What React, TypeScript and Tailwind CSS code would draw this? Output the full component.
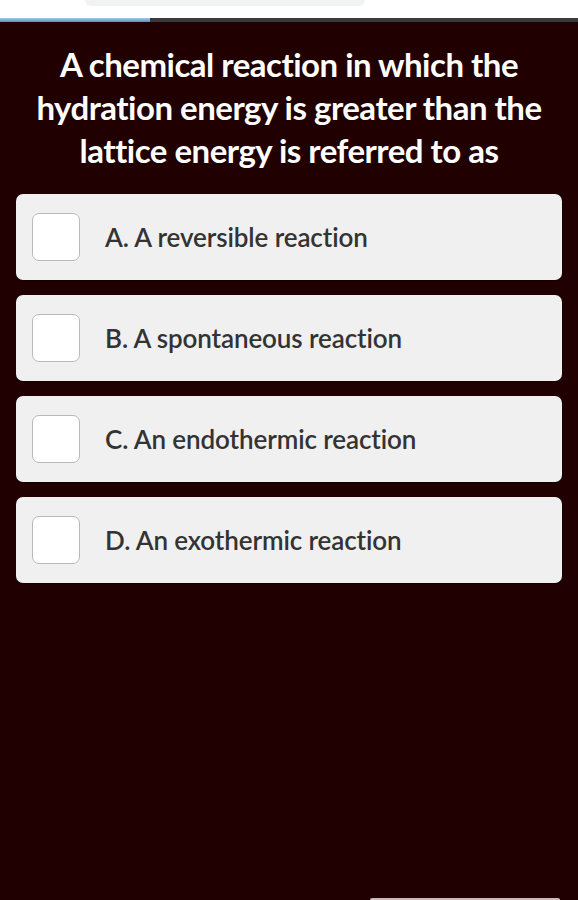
const options = [
  "A. A reversible reaction",
  "B. A spontaneous reaction",
  "C. An endothermic reaction",
  "D. An exothermic reaction",
];

export default function App() {
  return (
    <div className="h-[900px] w-[578px] overflow-hidden bg-[#210001] flex flex-col font-['Lato',sans-serif]">
      <div className="h-[18px] bg-white flex justify-start">
        <div className="ml-[85px] h-[6px] w-[280px] rounded-b-full bg-[#f1f2f4]" />
      </div>
      <div className="h-[4px] bg-[#3a3a3a] flex">
        <div className="w-[150px] h-full bg-gradient-to-b from-[#a9c8e4] to-[#5a8fc0]" />
      </div>

      <h1 className="mt-[21px] px-[20px] text-center text-white font-bold text-[33px] leading-[43px] tracking-[-0.5px]">
        A chemical reaction in which the hydration energy is greater than the lattice energy is referred to as
      </h1>

      <div className="mt-[22px] px-[16px] flex flex-col gap-[15px]">
        {options.map((o) => (
          <div
            key={o}
            className="h-[86px] rounded-[7px] bg-[#f0f0f0] shadow-[0_1px_2px_rgba(0,0,0,0.4)] flex items-center pl-[16px]"
          >
            <div className="w-[48px] h-[48px] rounded-[7px] border border-[#b9b9b9] bg-white" />
            <span className="ml-[25px] text-[#333333] text-[26px] font-semibold tracking-[-0.1px]">{o}</span>
          </div>
        ))}
      </div>

      <div className="flex-1" />
      <div className="flex justify-end pr-[18px]">
        <div className="w-[190px] h-[2px] bg-[#c9b9b9] rounded-t" />
      </div>
    </div>
  );
}
